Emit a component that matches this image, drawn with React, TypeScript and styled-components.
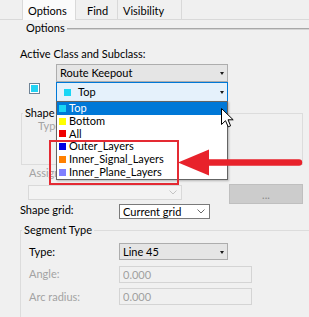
import React from 'react';
import styled, { createGlobalStyle } from 'styled-components';

const GlobalStyle = createGlobalStyle`
  html, body { margin: 0; padding: 0; background: #f0f0f0; }
  #root { width: 309px; height: 317px; }
`;

const FONT = `Lato, "Noto Sans", "Liberation Sans", sans-serif`;

const Page = styled.div`
  position: relative;
  width: 309px;
  height: 317px;
  overflow: hidden;
  background: #f0f0f0;
  font-family: ${FONT};
  font-size: 11px;
  color: #000;
  display: flex;
  flex-direction: column;
  box-sizing: border-box;
  * { box-sizing: border-box; }
`;

const TabStrip = styled.div`
  display: flex;
  height: 20px;
  flex: none;
`;

const TabGap = styled.div<{ $w?: number }>`
  width: ${(p) => (p.$w ? `${p.$w}px` : 'auto')};
  flex: ${(p) => (p.$w ? 'none' : '1')};
  border-bottom: 1px solid #d9d9d9;
`;

const Tab = styled.div<{ $active?: boolean; $w: number; $pl: number }>`
  width: ${(p) => p.$w}px;
  flex: none;
  padding-left: ${(p) => p.$pl}px;
  padding-top: 3px;
  line-height: 16px;
  white-space: nowrap;
  background: ${(p) => (p.$active ? '#fbfbfb' : '#f0f0f0')};
  border-right: 1px solid #d9d9d9;
  border-left: ${(p) => (p.$active ? '1px solid #d9d9d9' : 'none')};
  border-bottom: ${(p) => (p.$active ? 'none' : '1px solid #d9d9d9')};
`;

const GroupHeader = styled.div`
  display: flex;
  align-items: center;
  height: 16px;
  line-height: 16px;
  padding-left: 26px;
  flex: none;
`;

const HeaderRule = styled.div`
  flex: 1;
  height: 2px;
  margin-left: 2px;
  margin-top: 2px;
  border-top: 1px solid #a8a8a8;
  border-bottom: 1px solid #d4d4d4;
`;

const Label = styled.div<{ $x?: number; $mt?: number; $muted?: boolean }>`
  margin-left: ${(p) => p.$x ?? 0}px;
  margin-top: ${(p) => p.$mt ?? 0}px;
  height: 16px;
  line-height: 16px;
  flex: none;
  white-space: nowrap;
  color: ${(p) => (p.$muted ? '#a3a3a3' : '#000')};
`;

const Row = styled.div<{ $x?: number; $mt?: number; $h: number; $gap?: number }>`
  display: flex;
  align-items: flex-start;
  height: ${(p) => p.$h}px;
  margin-left: ${(p) => p.$x ?? 0}px;
  margin-top: ${(p) => p.$mt ?? 0}px;
  gap: ${(p) => p.$gap ?? 0}px;
  flex: none;
`;

type ComboKind = 'gray' | 'focus' | 'white' | 'disabled' | 'field';

const comboBorder: Record<ComboKind, string> = {
  gray: '#adadad',
  focus: '#0078d7',
  white: '#7a7a7a',
  disabled: '#d9d9d9',
  field: '#d4d4d4',
};
const comboBg: Record<ComboKind, string> = {
  gray: '#e5e5e5',
  focus: '#e5f1fb',
  white: '#ffffff',
  disabled: '#f3f3f3',
  field: '#f0f0f0',
};

const Combo = styled.div<{ $kind: ComboKind; $w: number; $h: number; $pl?: number; $mt?: number }>`
  display: flex;
  align-items: center;
  flex: none;
  width: ${(p) => p.$w}px;
  height: ${(p) => p.$h}px;
  margin-top: ${(p) => p.$mt ?? 0}px;
  padding: 0 2px 0 ${(p) => p.$pl ?? 3}px;
  border: 1px solid ${(p) => comboBorder[p.$kind]};
  background: ${(p) => comboBg[p.$kind]};
  color: ${(p) => (p.$kind === 'field' || p.$kind === 'disabled' ? '#a0a0a0' : '#000')};
  line-height: ${(p) => p.$h - 2}px;
  white-space: nowrap;
`;

const ComboText = styled.span`
  flex: 1;
  display: flex;
  align-items: center;
  overflow: hidden;
`;

const DropArrow = styled.span`
  width: 0;
  height: 0;
  border-left: 2.5px solid transparent;
  border-right: 2.5px solid transparent;
  border-top: 3px solid #1a1a1a;
  margin-right: 1px;
  margin-top: 1px;
`;

const Chevron = ({ color }: { color: string }) => (
  <svg width="8" height="5" viewBox="0 0 8 5" style={{ marginRight: 2 }}>
    <polyline points="0.5,0.5 4,4 7.5,0.5" fill="none" stroke={color} strokeWidth="1" />
  </svg>
);

const Swatch = styled.span<{ $c: string; $mr?: number }>`
  display: inline-block;
  width: 7px;
  height: 7px;
  flex: none;
  background: ${(p) => p.$c};
  margin-right: ${(p) => p.$mr ?? 3}px;
`;

const ColorBox = styled.div`
  width: 11px;
  height: 11px;
  margin-top: 1px;
  margin-right: 16px;
  border: 1px solid #6f8396;
  padding: 1px;
  background: #ffffff;
  flex: none;
  &::after {
    content: '';
    display: block;
    width: 100%;
    height: 100%;
    background: #22d3f3;
  }
`;

const Group = styled.fieldset<{ $x: number; $w: number; $h: number; $mt: number }>`
  margin: ${(p) => p.$mt}px 0 0 ${(p) => p.$x}px;
  padding: 0;
  width: ${(p) => p.$w}px;
  height: ${(p) => p.$h}px;
  min-width: 0;
  border: 1px solid #dcdcdc;
  flex: none;
`;

const Legend = styled.legend`
  padding: 0 2px;
  margin-left: 1px;
  line-height: 16px;
  height: 16px;
`;

const DotsButton = styled.div`
  width: 74px;
  height: 20px;
  flex: none;
  background: #cccccc;
  border: 1px solid #bfbfbf;
  color: #8a8a8a;
  text-align: center;
  line-height: 20px;
  font-size: 11px;
`;

const FieldGrid = styled.div`
  display: grid;
  grid-template-columns: 90px auto;
  grid-auto-rows: 17px;
  row-gap: 5.5px;
  align-items: center;
  margin: 5px 0 0 8px;
`;

const DropList = styled.ul`
  position: absolute;
  left: 56px;
  top: 101px;
  width: 172px;
  margin: 0;
  padding: 0;
  list-style: none;
  background: #ffffff;
  border: 1px solid #646464;
  box-shadow: 1px 1px 2px rgba(0, 0, 0, 0.25);
`;

const DropItem = styled.li<{ $sel?: boolean }>`
  display: flex;
  align-items: center;
  height: 12.75px;
  line-height: 12.75px;
  padding-left: 2px;
  white-space: nowrap;
  background: ${(p) => (p.$sel ? '#0078d7' : 'transparent')};
  color: ${(p) => (p.$sel ? '#ffffff' : '#000000')};
`;

const Callout = styled.div`
  position: absolute;
  left: 49px;
  top: 140px;
  width: 130px;
  height: 45px;
  border: 2px solid #e42a33;
`;

const ArrowSvg = styled.svg`
  position: absolute;
  left: 176px;
  top: 146px;
`;

const CursorSvg = styled.svg`
  position: absolute;
  left: 221px;
  top: 108px;
`;

const layers = [
  { name: 'Top', color: '#19d6f5' },
  { name: 'Bottom', color: '#ffff00' },
  { name: 'All', color: '#f00000' },
  { name: 'Outer_Layers', color: '#0000e6' },
  { name: 'Inner_Signal_Layers', color: '#ff8000' },
  { name: 'Inner_Plane_Layers', color: '#8080ff' },
];

export default function App() {
  return (
    <>
      <GlobalStyle />
      <Page>
        <TabStrip>
          <TabGap $w={22} />
          <Tab $active $w={54} $pl={5}>Options</Tab>
          <Tab $w={42} $pl={11}>Find</Tab>
          <Tab $w={64} $pl={5}>Visibility</Tab>
          <TabGap />
        </TabStrip>

        <GroupHeader>
          Options
          <HeaderRule />
        </GroupHeader>

        <Label $x={20} $mt={10}>Active Class and Subclass:</Label>

        <Row $x={56} $mt={2} $h={18}>
          <Combo $kind="gray" $w={172} $h={18}>
            <ComboText>Route Keepout</ComboText>
            <DropArrow />
          </Combo>
        </Row>

        <Row $x={29} $h={20}>
          <ColorBox />
          <Combo $kind="focus" $w={172} $h={20} $pl={7}>
            <ComboText>
              <Swatch $c="#19d6f5" $mr={7} />
              Top
            </ComboText>
            <DropArrow />
          </Combo>
        </Row>

        <Group $x={21} $w={282} $h={60} $mt={3}>
          <Legend>Shape</Legend>
          <Label $x={16} $mt={-3} $muted>Type:</Label>
        </Group>

        <Label $x={29} $muted>Assign net name:</Label>

        <Row $x={28} $mt={3} $h={20} $gap={47}>
          <Combo $kind="disabled" $w={154} $h={15} $mt={1}>
            <ComboText />
            <Chevron color="#c4c4c4" />
          </Combo>
          <DotsButton>...</DotsButton>
        </Row>

        <Row $x={20} $h={15}>
          <Label $mt={-2} style={{ width: 99 }}>Shape grid:</Label>
          <Combo $kind="white" $w={91} $h={15}>
            <ComboText>Current grid</ComboText>
            <Chevron color="#6a6a6a" />
          </Combo>
        </Row>

        <Group $x={20} $w={292} $h={110} $mt={3}>
          <Legend>Segment Type</Legend>
          <FieldGrid>
            <Label>Type:</Label>
            <Combo $kind="gray" $w={109} $h={17}>
              <ComboText>Line 45</ComboText>
              <DropArrow />
            </Combo>
            <Label $muted>Angle:</Label>
            <Combo $kind="field" $w={133} $h={17}>
              <ComboText>0.000</ComboText>
            </Combo>
            <Label $muted>Arc radius:</Label>
            <Combo $kind="field" $w={133} $h={17}>
              <ComboText>0.000</ComboText>
            </Combo>
          </FieldGrid>
        </Group>

        <DropList>
          {layers.map((l, i) => (
            <DropItem key={l.name} $sel={i === 0}>
              <Swatch $c={l.color} />
              {l.name}
            </DropItem>
          ))}
        </DropList>

        <Callout />

        <ArrowSvg width="130" height="32" viewBox="0 0 130 32">
          <polygon points="2,16.5 33,3.5 33,29.5" fill="#e8222b" />
          <path d="M31,13.3 H123 a3.2,3.2 0 0 1 0,6.4 H31 Z" fill="#e8222b" />
        </ArrowSvg>

        <CursorSvg width="14" height="21" viewBox="0 0 14 21">
          <path
            d="M0.5,0.5 L0.5,16.5 L4.5,12.7 L7.2,18.8 L9.6,17.8 L7,11.8 L12.2,11.8 Z"
            fill="#ffffff"
            stroke="#000000"
            strokeWidth="1"
            strokeLinejoin="miter"
          />
        </CursorSvg>
      </Page>
    </>
  );
}
